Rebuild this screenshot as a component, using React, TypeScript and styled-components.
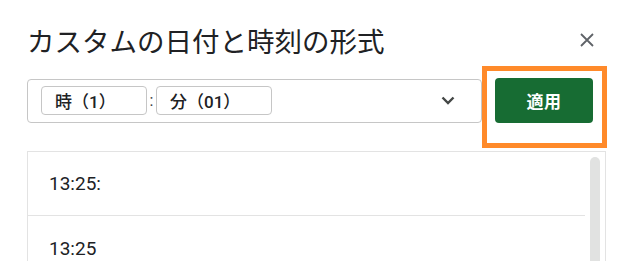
import React from "react";
import styled, { createGlobalStyle } from "styled-components";

const Global = createGlobalStyle`
  html, body { margin: 0; padding: 0; background: #ffffff; }
  body { font-family: Roboto, "Noto Sans CJK JP", sans-serif; color: #202124; }
`;

const Dialog = styled.div`
  position: relative;
  width: 635px;
  height: 261px;
  overflow: hidden;
  box-sizing: border-box;
  padding: 24px 29px 0 27px;
`;

const Header = styled.div`
  display: flex;
  align-items: center;
  justify-content: space-between;
  height: 32px;
`;

const Title = styled.h1`
  margin: 0;
  font-family: "Noto Sans CJK JP", Roboto, sans-serif;
  font-size: 27.5px;
  font-weight: 400;
  letter-spacing: 0;
  line-height: 32px;
  color: #202124;
`;

const CloseButton = styled.button`
  width: 24px;
  height: 24px;
  border: 0;
  padding: 0;
  background: transparent;
  display: flex;
  align-items: center;
  justify-content: center;
  margin-right: 7px;
`;

const Toolbar = styled.div`
  display: flex;
  align-items: center;
  gap: 13px;
  margin-top: 22px;
`;

const FormatInput = styled.div`
  flex: 0 0 455px;
  height: 44px;
  box-sizing: border-box;
  border: 1px solid #c6c6c6;
  border-radius: 4px;
  display: flex;
  align-items: center;
  padding: 0 26px 0 13px;
`;

const Chip = styled.div<{ $w: number }>`
  width: ${(p) => p.$w}px;
  flex: 0 0 auto;
  height: 29px;
  box-sizing: border-box;
  border: 1px solid #c6c6c6;
  border-radius: 4px;
  display: flex;
  align-items: center;
  padding: 0 0 0 13px;
  font-family: Roboto, "Noto Sans CJK JP", sans-serif;
  font-size: 17px;
  font-weight: 500;
  color: #202124;
  white-space: nowrap;
`;

const Sep = styled.span`
  flex: 0 0 9px;
  text-align: center;
  font-size: 16px;
  color: #3c4043;
`;

const Spacer = styled.div`
  flex: 1;
`;

const ApplyButton = styled.button`
  width: 98px;
  height: 45px;
  border: 0;
  border-radius: 4px;
  background: #176c33;
  color: #ffffff;
  font-family: "Noto Sans CJK JP", Roboto, sans-serif;
  font-size: 17px;
  font-weight: 700;
  letter-spacing: 0.5px;
`;

const Highlight = styled.div`
  position: absolute;
  left: 482px;
  top: 66px;
  width: 125px;
  height: 82px;
  box-sizing: border-box;
  border: 5px solid #ff8a2a;
  pointer-events: none;
`;

const List = styled.div`
  margin-top: 28px;
  width: 579px;
  height: 130px;
  box-sizing: border-box;
  border: 1px solid #e3e3e3;
  border-bottom: 0;
  display: flex;
  padding-right: 5px;
`;

const Rows = styled.div`
  flex: 1;
`;

const Row = styled.div<{ $last?: boolean }>`
  height: 64px;
  box-sizing: border-box;
  display: flex;
  align-items: center;
  padding-left: 21px;
  border-bottom: ${(p) => (p.$last ? "0" : "1px solid #e3e3e3")};
  font-family: Roboto, sans-serif;
  font-size: 19px;
  font-weight: 400;
  color: #202124;
`;

const Scrollbar = styled.div`
  width: 10px;
  margin: 5px 0 0 5px;
  border-radius: 5px 5px 0 0;
  background: #e1e2e1;
`;

export default function App() {
  return (
    <>
      <Global />
      <Dialog>
        <Header>
          <Title>カスタムの日付と時刻の形式</Title>
          <CloseButton aria-label="閉じる">
            <svg width="14" height="14" viewBox="0 0 14 14">
              <path d="M1 1 L13 13 M13 1 L1 13" stroke="#5f6368" strokeWidth="1.8" fill="none" />
            </svg>
          </CloseButton>
        </Header>
        <Toolbar>
          <FormatInput>
            <Chip $w={106}>時（1）</Chip>
            <Sep>:</Sep>
            <Chip $w={116}>分（01）</Chip>
            <Spacer />
            <svg width="14" height="9" viewBox="0 0 14 9">
              <path d="M1.5 1.5 L7 7 L12.5 1.5" stroke="#444746" strokeWidth="2.4" fill="none" />
            </svg>
          </FormatInput>
          <ApplyButton>適用</ApplyButton>
        </Toolbar>
        <List>
          <Rows>
            <Row>13:25:</Row>
            <Row $last>13:25</Row>
          </Rows>
          <Scrollbar />
        </List>
        <Highlight />
      </Dialog>
    </>
  );
}
